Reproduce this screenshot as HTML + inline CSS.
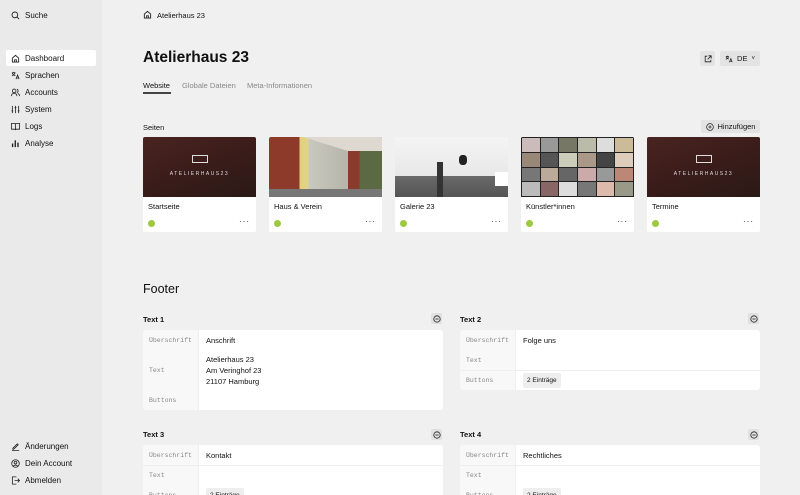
<!DOCTYPE html>
<html style="overflow:hidden;width:800px;height:495px"><head><meta charset="utf-8"><style>
*{box-sizing:border-box;margin:0;padding:0}
body{width:800px;height:495px;overflow:hidden;background:#f0f0f0;font-family:"Liberation Sans",sans-serif;font-size:8px;color:#111;position:relative}
.side{position:absolute;left:0;top:0;width:102px;height:495px;background:#eaeaea}
.ni{position:absolute;left:6px;width:90px;height:16px;display:flex;align-items:center;padding-left:5px;gap:5px;font-size:8px;border-radius:2px}
.ni svg{width:9px;height:9px;flex:none}
.ni.act{background:#fff}
.abs{position:absolute}
.btn{position:absolute;background:#e3e3e3;border-radius:2px;display:flex;align-items:center;justify-content:center;gap:4px;font-size:7.5px}
.card{position:absolute;top:137px;width:113px;height:95px;background:#fff;border-radius:2px;overflow:hidden}
.card .img{height:60px}
.card .t{position:absolute;left:5px;top:65px;font-size:7.5px}
.card .dot{position:absolute;left:5px;top:83px;width:7px;height:7px;border-radius:50%;background:#9dc940}
.card .m{position:absolute;right:6px;top:80px;font-size:8px;letter-spacing:1px}
.blk{position:absolute;background:#fff;border-radius:3px;overflow:hidden}
.row{display:flex;border-top:1px solid #eee}
.row:first-child{border-top:none}
.row .l{width:56px;background:#f8f8f8;font-family:"Liberation Mono",monospace;font-size:6.5px;color:#888;padding-left:6px;display:flex;align-items:center;border-right:1px solid #eee}
.row .v{flex:1;padding-left:7px;display:flex;align-items:center;font-size:7.5px;line-height:11px}
.tag{background:#eee;border-radius:2px;padding:2px 4px;font-size:6.5px}
.bt{position:absolute;font-size:7.5px;font-weight:bold}
.minus{position:absolute;width:11px;height:11px;background:#e0e0e0;border-radius:2px;display:flex;align-items:center;justify-content:center}
</style></head><body>
<div class="side">
<div class="ni" style="top:7px"><svg viewBox="0 0 10 10" fill="none" stroke="#222" stroke-width="1"><circle cx="4.3" cy="4.3" r="3.2"/><path d="M6.6 6.6L9 9"/></svg>Suche</div>
<div class="ni act" style="top:50px"><svg viewBox="0 0 10 10" fill="none" stroke="#222" stroke-width="1"><path d="M1.5 4.5L5 1.5 8.5 4.5V9H1.5Z M4 9V6.5H6V9"/></svg>Dashboard</div>
<div class="ni" style="top:67px"><svg viewBox="0 0 10 10" fill="none" stroke="#222" stroke-width="0.9"><path d="M1 2H5M3 1V2M1.5 2Q2 5 5 5M4.5 2Q4 4 1 5.5M5.5 9L7.3 4.5 9 9M6 7.8H8.5"/></svg>Sprachen</div>
<div class="ni" style="top:84px"><svg viewBox="0 0 10 10" fill="none" stroke="#222" stroke-width="0.9"><circle cx="3.5" cy="3.2" r="2"/><path d="M0.5 9Q0.5 6 3.5 6 6.5 6 6.5 9M6.5 1.3A2 2 0 0 1 6.5 5.1M7.5 6.2Q9.5 6.7 9.5 9"/></svg>Accounts</div>
<div class="ni" style="top:101px"><svg viewBox="0 0 10 10" fill="none" stroke="#222" stroke-width="0.9"><path d="M1.5 1V9M5 1V9M8.5 1V9M0.5 6.5H2.5M4 3H6M7.5 6.5H9.5"/></svg>System</div>
<div class="ni" style="top:118px"><svg viewBox="0 0 10 10" fill="none" stroke="#222" stroke-width="0.9"><path d="M0.5 1.5H4Q5 1.5 5 2.5V9Q5 8 4 8H0.5ZM9.5 1.5H6Q5 1.5 5 2.5V9Q5 8 6 8H9.5Z"/></svg>Logs</div>
<div class="ni" style="top:135px"><svg viewBox="0 0 10 10" fill="#222"><rect x="1" y="5" width="1.5" height="4"/><rect x="4" y="1.5" width="1.5" height="7.5"/><rect x="7" y="4" width="1.5" height="5"/></svg>Analyse</div>
<div class="ni" style="top:438px"><svg viewBox="0 0 10 10" fill="none" stroke="#222" stroke-width="0.9"><path d="M2 7L7 2 8 3 3 8H2ZM1 9.3H9"/></svg>Änderungen</div>
<div class="ni" style="top:455px"><svg viewBox="0 0 10 10" fill="none" stroke="#222" stroke-width="0.9"><circle cx="5" cy="5" r="4.2"/><circle cx="5" cy="4" r="1.5"/><path d="M2.3 8Q5 5.5 7.7 8"/></svg>Dein Account</div>
<div class="ni" style="top:472px"><svg viewBox="0 0 10 10" fill="none" stroke="#222" stroke-width="0.9"><path d="M6 1H1.5V9H6M4 5H9.5M7.5 3L9.5 5 7.5 7"/></svg>Abmelden</div>
</div>

<svg class="abs" style="left:143px;top:10px" width="9" height="9" viewBox="0 0 10 10" fill="none" stroke="#222" stroke-width="1"><path d="M1.5 4.5L5 1.5 8.5 4.5V9H1.5Z M4 9V6.5H6V9"/></svg>
<div class="abs" style="left:157px;top:11px;font-size:7.5px">Atelierhaus 23</div>
<div class="abs" style="left:143px;top:49px;font-size:15.5px;font-weight:bold">Atelierhaus 23</div>
<div class="btn" style="left:700px;top:51px;width:15px;height:15px"><svg width="8" height="8" viewBox="0 0 10 10" fill="none" stroke="#222" stroke-width="1"><path d="M4 1.5H1.5V8.5H8.5V6M5.5 1H9V4.5M9 1L4.5 5.5"/></svg></div>
<div class="btn" style="left:720px;top:51px;width:40px;height:15px"><svg width="8" height="8" viewBox="0 0 10 10" fill="none" stroke="#222" stroke-width="0.9"><path d="M1 2H5M3 1V2M1.5 2Q2 5 5 5M4.5 2Q4 4 1 5.5M5.5 9L7.3 4.5 9 9M6 7.8H8.5"/></svg><b style="font-weight:normal">DE</b><span style="font-size:6px">˅</span></div>
<div class="abs" style="left:143px;top:81px;font-size:7.5px">Website</div>
<div class="abs" style="left:143px;top:92px;width:28px;height:2px;background:#444"></div>
<div class="abs" style="left:182px;top:81px;font-size:7.5px;color:#888">Globale Dateien</div>
<div class="abs" style="left:247px;top:81px;font-size:7.5px;color:#888">Meta-Informationen</div>

<div class="abs" style="left:143px;top:123px;font-size:7.5px">Seiten</div>
<div class="btn" style="left:701px;top:120px;width:59px;height:13px"><svg width="8" height="8" viewBox="0 0 10 10" fill="none" stroke="#222" stroke-width="0.9"><circle cx="5" cy="5" r="4.2"/><path d="M5 3V7M3 5H7"/></svg>Hinzufügen</div>

<div class="card" style="left:143px"><div class="img" style="background:linear-gradient(160deg,#4a2420,#3a1c1a 50%,#2a1a16);position:relative"><div style="position:absolute;left:49px;top:18px;width:16px;height:8px;border:1px solid #ddd"></div><div style="position:absolute;left:0;right:0;top:34px;text-align:center;color:#ddd;font-size:5px;letter-spacing:1.5px">ATELIERHAUS23</div></div><div class="t">Startseite</div><div class="dot"></div><div class="m">···</div></div>
<div class="card" style="left:269px"><div class="img" style="background:linear-gradient(90deg,#8e3a2a 0,#8e3a2a 27%,#e3d17a 27%,#e0d48a 35%,#c8c8be 35%,#b5b5aa 70%,#8a3b2c 70%,#8a3b2c 80%,#5c6a44 80%);position:relative"><div style="position:absolute;left:0;right:0;top:0;height:14px;background:#ddd9d0;clip-path:polygon(30% 0,100% 0,100% 100%,70% 100%)"></div><div style="position:absolute;left:0;right:0;bottom:0;height:8px;background:#777"></div></div><div class="t">Haus &amp; Verein</div><div class="dot"></div><div class="m">···</div></div>
<div class="card" style="left:395px"><div class="img" style="background:linear-gradient(180deg,#f4f4f4 0,#e8e8e8 65%,#6a6a6a 65%,#555);position:relative"><div style="position:absolute;left:64px;top:18px;width:8px;height:10px;background:#222;border-radius:40%"></div><div style="position:absolute;left:42px;top:25px;width:6px;height:35px;background:#333"></div><div style="position:absolute;left:100px;top:35px;width:13px;height:14px;background:#fff"></div></div><div class="t">Galerie 23</div><div class="dot"></div><div class="m">···</div></div>
<div class="card" style="left:521px"><div class="img" style="background:#222;border:1px solid #222;display:grid;grid-template-columns:repeat(6,1fr);grid-template-rows:repeat(4,1fr);gap:1px">
<i style="background:#cbb"></i><i style="background:#999"></i><i style="background:#776"></i><i style="background:#bba"></i><i style="background:#ddd"></i><i style="background:#cb9"></i>
<i style="background:#987"></i><i style="background:#555"></i><i style="background:#ccb"></i><i style="background:#a98"></i><i style="background:#444"></i><i style="background:#dcb"></i>
<i style="background:#777"></i><i style="background:#ba9"></i><i style="background:#666"></i><i style="background:#caa"></i><i style="background:#999"></i><i style="background:#b87"></i>
<i style="background:#bbb"></i><i style="background:#866"></i><i style="background:#ddd"></i><i style="background:#777"></i><i style="background:#dba"></i><i style="background:#998"></i>
</div><div class="t">Künstler*innen</div><div class="dot"></div><div class="m">···</div></div>
<div class="card" style="left:647px"><div class="img" style="background:linear-gradient(160deg,#4a2420,#3a1c1a 50%,#2a1a16);position:relative"><div style="position:absolute;left:49px;top:18px;width:16px;height:8px;border:1px solid #ddd"></div><div style="position:absolute;left:0;right:0;top:34px;text-align:center;color:#ddd;font-size:5px;letter-spacing:1.5px">ATELIERHAUS23</div></div><div class="t">Termine</div><div class="dot"></div><div class="m">···</div></div>

<div class="abs" style="left:143px;top:282px;font-size:12.5px">Footer</div>

<div class="bt" style="left:143px;top:315px">Text 1</div>
<div class="minus" style="left:431px;top:313px"><svg width="8" height="8" viewBox="0 0 10 10" fill="none" stroke="#222"><circle cx="5" cy="5" r="4"/><path d="M3 5H7"/></svg></div>
<div class="blk" style="left:143px;top:330px;width:300px;height:80px">
<div class="row" style="height:20px"><div class="l">Überschrift</div><div class="v">Anschrift</div></div>
<div class="row" style="height:40px;border-top:none"><div class="l">Text</div><div class="v">Atelierhaus 23<br>Am Veringhof 23<br>21107 Hamburg</div></div>
<div class="row" style="height:20px;border-top:none"><div class="l">Buttons</div><div class="v"></div></div>
</div>

<div class="bt" style="left:460px;top:315px">Text 2</div>
<div class="minus" style="left:748px;top:313px"><svg width="8" height="8" viewBox="0 0 10 10" fill="none" stroke="#222"><circle cx="5" cy="5" r="4"/><path d="M3 5H7"/></svg></div>
<div class="blk" style="left:460px;top:330px;width:300px;height:60px">
<div class="row" style="height:20px"><div class="l">Überschrift</div><div class="v">Folge uns</div></div>
<div class="row" style="height:20px;border-top:none"><div class="l">Text</div><div class="v"></div></div>
<div class="row" style="height:20px"><div class="l">Buttons</div><div class="v"><span class="tag">2 Einträge</span></div></div>
</div>

<div class="bt" style="left:143px;top:430px">Text 3</div>
<div class="minus" style="left:431px;top:429px"><svg width="8" height="8" viewBox="0 0 10 10" fill="none" stroke="#222"><circle cx="5" cy="5" r="4"/><path d="M3 5H7"/></svg></div>
<div class="blk" style="left:143px;top:445px;width:300px;height:50px;border-radius:3px 3px 0 0">
<div class="row" style="height:20px"><div class="l">Überschrift</div><div class="v">Kontakt</div></div>
<div class="row" style="height:20px"><div class="l">Text</div><div class="v"></div></div>
<div class="row" style="height:20px;border-top:none"><div class="l">Buttons</div><div class="v"><span class="tag">2 Einträge</span></div></div>
</div>

<div class="bt" style="left:460px;top:430px">Text 4</div>
<div class="minus" style="left:748px;top:429px"><svg width="8" height="8" viewBox="0 0 10 10" fill="none" stroke="#222"><circle cx="5" cy="5" r="4"/><path d="M3 5H7"/></svg></div>
<div class="blk" style="left:460px;top:445px;width:300px;height:50px;border-radius:3px 3px 0 0">
<div class="row" style="height:20px"><div class="l">Überschrift</div><div class="v">Rechtliches</div></div>
<div class="row" style="height:20px"><div class="l">Text</div><div class="v"></div></div>
<div class="row" style="height:20px;border-top:none"><div class="l">Buttons</div><div class="v"><span class="tag">2 Einträge</span></div></div>
</div>
</body></html>
